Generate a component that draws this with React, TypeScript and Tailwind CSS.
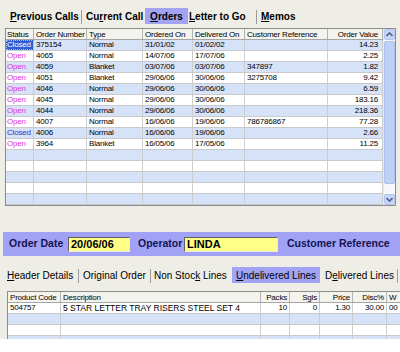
const orders = [
  ["Closed", "375154", "Normal", "31/01/02", "01/02/02", "", "14.23"],
  ["Open", "4065", "Normal", "14/07/06", "17/07/06", "", "2.25"],
  ["Open", "4059", "Blanket", "03/07/06", "03/07/06", "347897", "1.82"],
  ["Open", "4051", "Blanket", "29/06/06", "30/06/06", "3275708", "9.42"],
  ["Open", "4046", "Normal", "29/06/06", "30/06/06", "", "6.59"],
  ["Open", "4045", "Normal", "29/06/06", "30/06/06", "", "183.16"],
  ["Open", "4044", "Normal", "29/06/06", "30/06/06", "", "218.36"],
  ["Open", "4007", "Normal", "16/06/06", "19/06/06", "786786867", "77.28"],
  ["Closed", "4006", "Normal", "16/06/06", "19/06/06", "", "2.66"],
  ["Open", "3964", "Blanket", "16/05/06", "17/05/06", "", "11.25"],
  ["", "", "", "", "", "", ""],
  ["", "", "", "", "", "", ""],
  ["", "", "", "", "", "", ""],
  ["", "", "", "", "", "", ""],
  ["", "", "", "", "", "", ""],
];

const orderCols = [
  { title: "Status", w: "w-[28px] pl-[1px]", right: false },
  { title: "Order Number", w: "w-[53px] pl-[2px]", right: false },
  { title: "Type", w: "w-[56px] pl-[2px]", right: false },
  { title: "Ordered On", w: "w-[50px] pl-[2px]", right: false },
  { title: "Delivered On", w: "w-[52px] pl-[2px]", right: false },
  { title: "Customer Reference", w: "w-[83px] pl-[2px]", right: false },
  { title: "Order Value", w: "w-[55px] pr-[4px]", right: true },
];

const lineCols = [
  { title: "Product Code", w: "w-[53px] pl-[2px]", right: false },
  { title: "Description", w: "w-[200px] pl-[2px]", right: false },
  { title: "Packs", w: "w-[29px] pr-[2px]", right: true },
  { title: "Sgls", w: "w-[30px] pr-[2px]", right: true },
  { title: "Price", w: "w-[33px] pr-[2px]", right: true },
  { title: "Disc%", w: "w-[34px] pr-[2px]", right: true },
  { title: "W", w: "w-[40px] pl-[2px]", right: false },
];

const lines = [
  ["504757", "5 STAR LETTER TRAY RISERS STEEL SET 4", "10", "0", "1.30", "30.00", "00"],
  ["", "", "", "", "", "", ""],
  ["", "", "", "", "", "", ""],
  ["", "", "", "", "", "", ""],
];

type Tab = { label: string; u: number; w: string; pl?: string; active?: boolean; sep?: boolean };

const topTabs: Tab[] = [
  { label: "Previous Calls", u: 0, w: "w-[78px]", pl: "pl-[6px]", sep: true },
  { label: "Current Call", u: 2, w: "w-[63px]", pl: "pl-[4px]" },
  { label: "Orders", u: 0, w: "w-[43px]", active: true },
  { label: "Letter to Go", u: 0, w: "w-[69px]", pl: "pl-[1px]", sep: true },
  { label: "Memos", u: 0, w: "w-[37px]", pl: "pl-[4px]", sep: true },
];

const bottomTabs: Tab[] = [
  { label: "Header Details", u: 0, w: "w-[77px]", pl: "pl-[5px]", sep: true },
  { label: "Original Order", u: 3, w: "w-[72px]", pl: "pl-[4px]", sep: true },
  { label: "Non Stock Lines", u: 8, w: "w-[81px]", pl: "pl-[3px]" },
  { label: "Undelivered Lines", u: 0, w: "w-[88px]", active: true },
  { label: "Delivered Lines", u: 1, w: "w-[78px]", pl: "pl-[5px]", sep: true },
];

function Label({ text, u }: { text: string; u: number }) {
  return (
    <>
      {text.slice(0, u)}
      <span className="underline underline-offset-[1px]">{text[u]}</span>
      {text.slice(u + 1)}
    </>
  );
}

function TabRow({ tabs, bold }: { tabs: Tab[]; bold?: boolean }) {
  return (
    <div className={`flex h-[16px] ${bold ? "font-bold text-[10px]" : "text-[10px]"}`}>
      {tabs.map((t) =>
        t.active ? (
          <div key={t.label} className={`${t.w} h-full flex items-center justify-center bg-[#a3a3f4]`}>
            <Label text={t.label} u={t.u} />
          </div>
        ) : (
          <div key={t.label} className={`${t.w} ${t.pl} h-full flex items-center justify-between`}>
            <span className="whitespace-nowrap">
              <Label text={t.label} u={t.u} />
            </span>
            {t.sep && <div className="w-px h-[14px] mt-[2px] bg-[#9c9c9c]" />}
          </div>
        )
      )}
    </div>
  );
}

function Chevron({ down }: { down?: boolean }) {
  return (
    <svg width="7" height="5" viewBox="0 0 7 5">
      <polyline
        points={down ? "0.5,1 3.5,4 6.5,1" : "0.5,4 3.5,1 6.5,4"}
        fill="none"
        stroke="#4d6185"
        strokeWidth="1.6"
      />
    </svg>
  );
}

const cellText = "font-['Liberation_Sans',Arial,sans-serif] text-[8px] leading-[10px] tracking-[-0.2px]";

export default function App() {
  return (
    <div className="w-[400px] h-[339px] overflow-hidden bg-[#efeee6] text-black font-['Liberation_Sans',Arial,sans-serif]">
      <div className="pt-[8px] pl-[4px]">
        <TabRow tabs={topTabs} bold />
      </div>

      {/* orders list */}
      <div className="mt-[4px] ml-[5px] w-[391px] h-[178px] flex border border-[#8c8c8c] bg-white">
        <div className={`w-[377px] ${cellText}`}>
          <div className="flex h-[11px] bg-[#f4f3ee] border-b border-[#a6a6a6]">
            {orderCols.map((c) => (
              <div
                key={c.title}
                className={`${c.w} pt-px overflow-hidden whitespace-nowrap border-r border-[#b4b4b4] ${c.right ? "text-right" : ""}`}
              >
                {c.title}
              </div>
            ))}
          </div>
          {orders.map((r, i) => (
            <div
              key={i}
              className={`flex h-[11px] border-b border-[#c9c9c9] ${i % 2 === 0 ? "bg-[#d6e2f7]" : "bg-white"}`}
            >
              {r.map((v, j) => {
                const col = orderCols[j];
                let extra = "";
                if (j === 0 && v === "Open") extra = "text-[#e233e2]";
                if (j === 0 && v === "Closed")
                  extra =
                    i === 0
                      ? "bg-[#2f5fcf] text-white outline outline-1 outline-dotted outline-offset-[-1px] outline-[#9fb6f0]"
                      : "text-[#3535cf]";
                return (
                  <div
                    key={j}
                    className={`${col.w} overflow-hidden whitespace-nowrap border-r border-[#cdcdcd] ${col.right ? "text-right" : ""} ${extra}`}
                  >
                    {v}
                  </div>
                );
              })}
            </div>
          ))}
        </div>
        {/* scrollbar */}
        <div className="w-[12px] flex flex-col bg-[#f6f7fb] border-l border-[#e6e9f2]">
          <div className="h-[11px] flex items-center justify-center bg-[#c6d5f8] border border-[#b2c5ef] rounded-[2px]">
            <Chevron />
          </div>
          <div className="h-[143px] mt-px bg-[#bfd0f7] border border-[#aec2ee] rounded-[2px]" />
          <div className="flex-1" />
          <div className="h-[11px] flex items-center justify-center bg-[#c6d5f8] border border-[#b2c5ef] rounded-[2px]">
            <Chevron down />
          </div>
        </div>
      </div>

      {/* header strip */}
      <div className="mt-[26px] ml-[3px] h-[24px] bg-[#a1a1f6] flex items-center font-bold text-[10.5px] text-[#141450]">
        <span className="ml-[6px] w-[59px]">Order Date</span>
        <div className="w-[62px] h-[15px] bg-[#ffff88] border-t border-l border-[#606060] border-b border-r border-b-[#e8e8e8] border-r-[#e8e8e8] flex items-center pl-[2px] text-[11px] text-black">
          20/06/06
        </div>
        <span className="ml-[8px] w-[46px]">Operator</span>
        <div className="w-[94px] h-[15px] bg-[#ffff88] border-t border-l border-[#606060] border-b border-r border-b-[#e8e8e8] border-r-[#e8e8e8] flex items-center pl-[2px] text-[11px] text-black">
          LINDA
        </div>
        <span className="ml-[9px] whitespace-nowrap">Customer Reference</span>
      </div>

      <div className="mt-[11px] pl-[2px]">
        <TabRow tabs={bottomTabs} />
      </div>

      {/* order lines */}
      <div className={`mt-[8px] ml-[7px] w-[460px] border-t border-l border-[#8c8c8c] bg-white ${cellText}`}>
        <div className="flex h-[11px] bg-[#f4f3ee] border-b border-[#a6a6a6]">
          {lineCols.map((c) => (
            <div
              key={c.title}
              className={`${c.w} pt-px overflow-hidden whitespace-nowrap border-r border-[#b4b4b4] ${c.right ? "text-right" : ""}`}
            >
              {c.title}
            </div>
          ))}
        </div>
        {lines.map((r, i) => (
          <div key={i} className={`flex h-[11px] border-b border-[#c9c9c9] ${i % 2 === 1 ? "bg-[#d6e2f7]" : "bg-white"}`}>
            {r.map((v, j) => (
              <div
                key={j}
                className={`${lineCols[j].w} overflow-hidden whitespace-nowrap border-r border-[#cdcdcd] ${lineCols[j].right ? "text-right" : ""} ${j === 1 ? "text-[8.5px] tracking-normal" : ""}`}
              >
                {v}
              </div>
            ))}
          </div>
        ))}
      </div>
    </div>
  );
}
